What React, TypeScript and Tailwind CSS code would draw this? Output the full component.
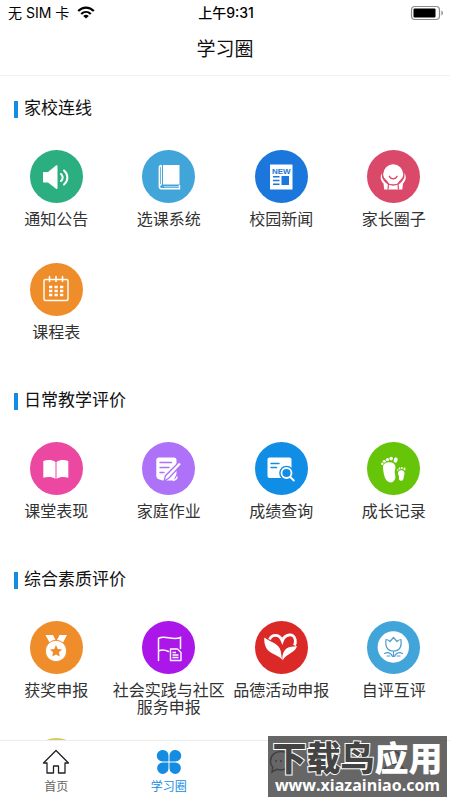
import React from 'react';

type Item = { nome: string; cor: string; icone: React.ReactNode };
type Secao = { titulo: string; itens: Item[] };

const SECOES: Secao[] = [
  {
    titulo: '家校连线',
    itens: [
      { nome: '通知公告', cor: 'bg-[#2caf80]', icone: <IconeSom /> },
      { nome: '选课系统', cor: 'bg-[#42a5d9]', icone: <IconeLivro /> },
      { nome: '校园新闻', cor: 'bg-[#1c77dc]', icone: <IconeJornal /> },
      { nome: '家长圈子', cor: 'bg-[#da4969]', icone: <IconeCrianca /> },
      { nome: '课程表', cor: 'bg-[#f08d2b]', icone: <IconeCalendario /> },
    ],
  },
  {
    titulo: '日常教学评价',
    itens: [
      { nome: '课堂表现', cor: 'bg-[#ec48a2]', icone: <IconeLivroAberto /> },
      { nome: '家庭作业', cor: 'bg-[#ad72f8]', icone: <IconeTarefa /> },
      { nome: '成绩查询', cor: 'bg-[#108ee6]', icone: <IconeConsulta /> },
      { nome: '成长记录', cor: 'bg-[#66c508]', icone: <IconePegadas /> },
    ],
  },
  {
    titulo: '综合素质评价',
    itens: [
      { nome: '获奖申报', cor: 'bg-[#f08d2b]', icone: <IconeMedalha /> },
      { nome: '社会实践与社区服务申报', cor: 'bg-[#ab17e9]', icone: <IconeBandeira /> },
      { nome: '品德活动申报', cor: 'bg-[#db2928]', icone: <IconeCoracao /> },
      { nome: '自评互评', cor: 'bg-[#42a5d9]', icone: <IconeFlor /> },
      { nome: '', cor: 'bg-[#d9c75a]', icone: null },
    ],
  },
];

function Svg({ children }: { children: React.ReactNode }) {
  return (
    <svg viewBox="0 0 53 53" className="size-full" fill="none" aria-hidden="true">
      {children}
    </svg>
  );
}

function IconeSom() {
  return (
    <Svg>
      <path d="M14 22h4l8-6.500c.8-.6 1.500-.3 1.500.6v22c0 .9-.8 1.200-1.500.6l-8-6.200h-4c-.7 0-1-.4-1-1V23c0-.6.3-1 1-1z" fill="#fff" />
      <path d="M31 24q3.500 3.500 0 7M34 20.500c4.500 4 4.500 10 0 14" stroke="#fff" strokeWidth="2" strokeLinecap="round" />
    </Svg>
  );
}

function IconeLivro() {
  return (
    <Svg>
      <path d="M21 15h16.500v19.500H21z" fill="#fff" />
      <path d="M37.500 35v3.800H20c-3.500 0-3.500-4.300-.3-4.300M17.300 37V18c0-1.700.8-2.500 2.200-2.500" stroke="#fff" strokeWidth="1.400" />
      <path d="M19.400 15.500v18.500" stroke="#fff" strokeWidth="1.200" />
      <path d="M22 36.800h15" stroke="#fff" strokeWidth=".7" />
    </Svg>
  );
}

function IconeJornal() {
  return (
    <Svg>
      <rect x="15" y="14.500" width="22.500" height="25" rx=".5" fill="#fff" />
      <text x="26.300" y="23.500" textAnchor="middle" fontSize="8" fontWeight="700" fontFamily="Liberation Sans, sans-serif" fill="#1c77dc">
        NEW
      </text>
      <path d="M18 26.700h6.500M18 30.500h6.500M18 34.300h6.500" stroke="#1c77dc" strokeWidth="1.400" />
      <rect x="26.500" y="26" width="7.500" height="9" fill="#1c77dc" />
    </Svg>
  );
}

function IconeCrianca() {
  return (
    <Svg>
      <path d="M15.500 22.500C13 26 13 30 16.500 33.500l.7 6h18.100l.7-6c3.500-3.500 3.500-7.500 1-11z" fill="#fff" />
      <circle cx="26.200" cy="24.300" r="10.700" fill="#fff" stroke="#da4969" strokeWidth="1.300" />
      <path d="M22.300 26.300c1.500 3.300 6.300 3.300 7.800 0" stroke="#da4969" strokeWidth="1.300" strokeLinecap="round" />
      <path d="M15.500 26.500c1.500 3.500 5.500 4.500 6 8l-.5 5M37 26.500c-1.500 3.500-5.500 4.500-6 8l.5 5" stroke="#da4969" strokeWidth="1.200" />
    </Svg>
  );
}

function IconeCalendario() {
  return (
    <Svg>
      <rect x="14" y="16.500" width="24" height="21" rx="1.500" stroke="#fff" strokeWidth="1.400" />
      <path d="M19.500 13.500v5M26 13.500v5M32.500 13.500v5" stroke="#fff" strokeWidth="1.500" strokeLinecap="round" />
      <path d="M19 24h3.300M24.500 24h3.300M30 24h3.300M19 28h3.300M24.500 28h3.300M30 28h3.300M19 32h3.300M24.500 32h3.300M30 32h3.300" stroke="#fff" strokeWidth="2.400" />
    </Svg>
  );
}

function IconeLivroAberto() {
  return (
    <Svg>
      <path d="M13.300 19c4-1.400 9-1.200 12.200 1v16.800c-3.500-2.200-8-2.200-12.200-1zM38.300 19c-4-1.400-8.600-1.200-11.800 1v16.800c3.500-2.200 7.800-2.200 11.800-1z" fill="#fff" />
    </Svg>
  );
}

function IconeTarefa() {
  return (
    <Svg>
      <path d="M17 15.500h15c1.500 0 2.500 1 2.500 2.300V32l-3 6.500H20.500l-3-1c-2-.5-3.200-1.500-3.200-3.500V18c0-1.600 1-2.500 2.700-2.500z" fill="#fff" />
      <path d="M18 20.500h11.500M18 25.500h9M18 30.500h4" stroke="#ad72f8" strokeWidth="1.400" strokeLinecap="round" />
      <path d="M36.300 20.700c1.300-1 3.700.9 2.700 2.300L27 36l-5 3.300 1.500-5.600z" fill="#fff" stroke="#ad72f8" strokeWidth="1.300" />
      <path d="M35 34.500c0 2-1.500 3.500-4 4" stroke="#fff" strokeWidth="1.500" />
    </Svg>
  );
}

function IconeConsulta() {
  return (
    <Svg>
      <rect x="12.500" y="15.500" width="24" height="20.500" rx="2" fill="#fff" />
      <path d="M16 21.500h8M16 25.500h5.500" stroke="#108ee6" strokeWidth="1.400" strokeLinecap="round" />
      <circle cx="31.500" cy="31" r="7.300" fill="#108ee6" />
      <circle cx="31.500" cy="31" r="5" stroke="#fff" strokeWidth="1.800" />
      <path d="M35.300 35l3.500 3.500" stroke="#fff" strokeWidth="1.900" strokeLinecap="round" />
    </Svg>
  );
}

function IconePegadas() {
  return (
    <Svg>
      <g fill="#fff">
        <path d="M16 26c-.5-4 3-6 7-5.700 4.500.3 6.500 3.700 5 7.700-1 3 .8 5 .3 8-.6 3.500-3.800 5.300-6.500 4.100-4.500-2-5.300-9.500-5.800-14.100z" />
        <ellipse cx="28.700" cy="18" rx="1.900" ry="2.700" transform="rotate(15 28.700 18)" />
        <circle cx="24.200" cy="16.600" r="1.800" />
        <circle cx="20.500" cy="17.500" r="1.600" />
        <circle cx="17.300" cy="19.300" r="1.400" />
        <circle cx="15.300" cy="21.800" r="1.200" />
        <path d="M31 31.500c0-2.700 2-3.500 3.700-3.200 2.500.3 3.300 2.500 2.600 4.600-.9 2.200-.2 5.500-2.800 5.800-2 .2-3-1.500-2.500-3.500.4-1.400-1-2-1-3.700z" />
        <ellipse cx="37.500" cy="27" rx="1" ry="1.400" />
        <circle cx="34.800" cy="26" r="1" />
        <circle cx="32.500" cy="26.500" r=".9" />
        <circle cx="30.700" cy="28" r=".8" />
      </g>
    </Svg>
  );
}

function IconeMedalha() {
  return (
    <Svg>
      <path d="M15.500 14h7.500l2.500 5-6 2.500zM37 14h-7.500L27 19l6 2.500z" fill="#fff" />
      <circle cx="26" cy="30" r="10.700" fill="#fff" stroke="#f08d2b" strokeWidth="1" />
      <path d="M26 24l1.800 3.900 4.300.5-3.200 2.900.9 4.200-3.800-2.100-3.800 2.100.9-4.200-3.200-2.900 4.300-.5z" fill="#f08d2b" />
    </Svg>
  );
}

function IconeBandeira() {
  return (
    <Svg>
      <path d="M16.500 39.500V17.500c7-4.500 13 3 22-1v11M16.500 30c4-2 7-1 10 .5" stroke="#fff" strokeWidth="1.500" strokeLinecap="round" />
      <path d="M28.500 28h7l3.500 3.500v8H28.500z" stroke="#fff" strokeWidth="1.400" strokeLinejoin="round" />
      <path d="M30.500 31.500h3.500M30.500 34h6M30.500 36.500h6" stroke="#fff" strokeWidth="1.300" />
    </Svg>
  );
}

function IconeCoracao() {
  return (
    <Svg>
      <path d="M14.500 18.500C17 13 24.500 12.500 27.300 20 30 12.500 38.500 12 40.200 18.500c.5 2.200.2 4-.7 6" stroke="#fff" strokeWidth="2.800" />
      <path d="M9.300 16.500C15 21 24 22 25.700 30L27 38.500C24 34 14 33 11 26.500 9.500 23 9 20 9.300 16.500z" fill="#fff" />
      <path d="M42 25c-1.500 7-11 7.500-14.500 14.500-.7-5.500 1-9.500 4-12 3-2.200 6.500-1.500 10.500-2.500z" fill="#fff" />
    </Svg>
  );
}

function IconeFlor() {
  return (
    <Svg>
      <circle cx="26.300" cy="26" r="15.700" fill="#fff" />
      <path d="M19 18.500c2 .2 3 .8 4 2l3.500-4 3.500 4c1-1.200 2-1.800 4-2 .8 7-1 11.500-7.500 11.500S18.200 25.500 19 18.500zM26.500 30v5.500M17.500 32.500c4-2 7 0 8 3M35.500 32.500c-4-2-7 0-8 3M20 35h3M30 35h3" stroke="#4f9fd0" strokeWidth="1.200" strokeLinejoin="round" strokeLinecap="round" />
    </Svg>
  );
}

function BarraStatus() {
  return (
    <div className="grid h-[25px] grid-cols-3 items-center pr-[6px] pl-2 font-['Inter','Noto_Sans_CJK_SC',sans-serif] text-sm text-black">
      <div className="flex items-center gap-2">
        <span>无 SIM 卡</span>
        <svg viewBox="0 0 18 13" className="h-[13px] w-[18px]" fill="none" aria-hidden="true">
          <path d="M1.200 5c4.500-4.600 11.100-4.600 15.600 0M4.200 8c2.800-2.700 6.800-2.700 9.600 0" stroke="#000" strokeWidth="2.200" />
          <path d="M9 12.500L6.200 9.900q2.800-2.200 5.600 0z" fill="#000" />
        </svg>
      </div>
      <span className="text-center font-medium">上午9:31</span>
      <svg viewBox="0 0 34 16" className="h-4 w-[34px] justify-self-end" fill="none" aria-hidden="true">
        <rect x="1.500" y="1.500" width="28" height="13" rx="3.500" stroke="#8c8c8c" strokeWidth="1.200" />
        <rect x="3.500" y="3.500" width="22" height="9" rx="1" fill="#000" />
        <path d="M31.500 5.500c1.700.8 1.700 4.200 0 5z" fill="#777" />
      </svg>
    </div>
  );
}

function Abas() {
  return (
    <nav className="grid h-[60px] shrink-0 grid-cols-4 border-t border-[#ececec] bg-white text-xs text-[#666]">
      <button type="button" className="flex flex-col items-center gap-1 pt-2">
        <svg viewBox="0 0 28 26" className="h-[26px] w-7" fill="none" stroke="#222" strokeWidth="1.300" strokeLinejoin="round" aria-hidden="true">
          <path d="M14 1.500L1.500 14H5v10h6.500v-7h5v7H23V14h3.500z" />
        </svg>
        首页
      </button>
      <button type="button" className="flex flex-col items-center gap-1 pt-2 text-[#168cdf]">
        <svg viewBox="0 0 26 26" className="size-[26px]" fill="#148ce2" aria-hidden="true">
          <path d="M6.500 1h.5a5.500 5.500 0 0 1 5.500 5.500v6H6.500a5.700 5.700 0 0 1 0-11.500zM19.500 1a5.700 5.700 0 0 1 0 11.500h-6v-6A5.500 5.500 0 0 1 19.500 1zM6.500 13.500h6v6a5.700 5.700 0 1 1-6-6zM13.500 13.500h6a5.700 5.700 0 1 1-6 6z" />
        </svg>
        学习圈
      </button>
      <button type="button" aria-label="消息" className="flex flex-col items-center pt-2">
        <svg viewBox="0 0 26 26" className="size-[26px]" fill="none" stroke="#000" strokeWidth="1.500" aria-hidden="true">
          <path d="M13 2.500c6 0 10.500 4 10.500 9.300S19 21 13 21c-1.500 0-3-.2-4.300-.7L4 23l.7-5C3 16.300 2.500 14 2.500 11.800 2.500 6.500 7 2.500 13 2.500z" />
          <path d="M8 11v2M13 11v2M18 11v2" />
        </svg>
      </button>
      <button type="button" aria-label="我的" className="flex flex-col items-center pt-2">
        <svg viewBox="0 0 26 26" className="size-[26px]" fill="none" stroke="#000" strokeWidth="1.500" aria-hidden="true">
          <circle cx="13" cy="8" r="5.500" />
          <path d="M3 24c0-6 4-9 10-9s10 3 10 9z" />
        </svg>
      </button>
    </nav>
  );
}

function MarcaDagua() {
  return (
    <div className="absolute right-[3px] bottom-[3px] flex h-[61px] w-[179px] flex-col items-center justify-end bg-[#4b4b4b]/85 pb-[3px] text-white">
      <div className="flex font-['Noto_Sans_CJK_SC',sans-serif] text-[34px] leading-[38px] font-black">
        <span className="text-[#444] [-webkit-text-stroke:2px_#fff] [paint-order:stroke]">下载鸟</span>
        <span>应用</span>
      </div>
      <span className="font-['Open_Sans',sans-serif] text-base leading-[18px] font-bold">www.xiazainiao.com</span>
    </div>
  );
}

export default function App() {
  return (
    <div className="relative flex h-screen flex-col overflow-hidden bg-white font-['Liberation_Sans','Noto_Sans_CJK_SC',sans-serif]">
      <header className="shrink-0 border-b border-[#f0f0f0]">
        <BarraStatus />
        <h1 className="flex h-[50px] items-center justify-center text-[19px] text-[#111]">学习圈</h1>
      </header>

      <main className="min-h-0 flex-1 overflow-hidden">
        {SECOES.map((secao) => (
          <section key={secao.titulo}>
            <h2 className="flex h-[66px] items-center gap-[6px] px-[14px] text-[17px] text-[#111]">
              <span className="h-[17px] w-1 bg-[#148ce2]"></span>
              {secao.titulo}
            </h2>
            <div className="grid grid-cols-4">
              {secao.itens.map((item) => (
                <button key={item.nome} type="button" className="flex min-h-[113px] flex-col items-center gap-2 pt-2 pb-[14px]">
                  <span className={`size-[53px] shrink-0 rounded-full ${item.cor}`}>{item.icone}</span>
                  <span className="text-base leading-[17px] text-[#333]">{item.nome}</span>
                </button>
              ))}
            </div>
          </section>
        ))}
      </main>

      <Abas />
      <MarcaDagua />
    </div>
  );
}
